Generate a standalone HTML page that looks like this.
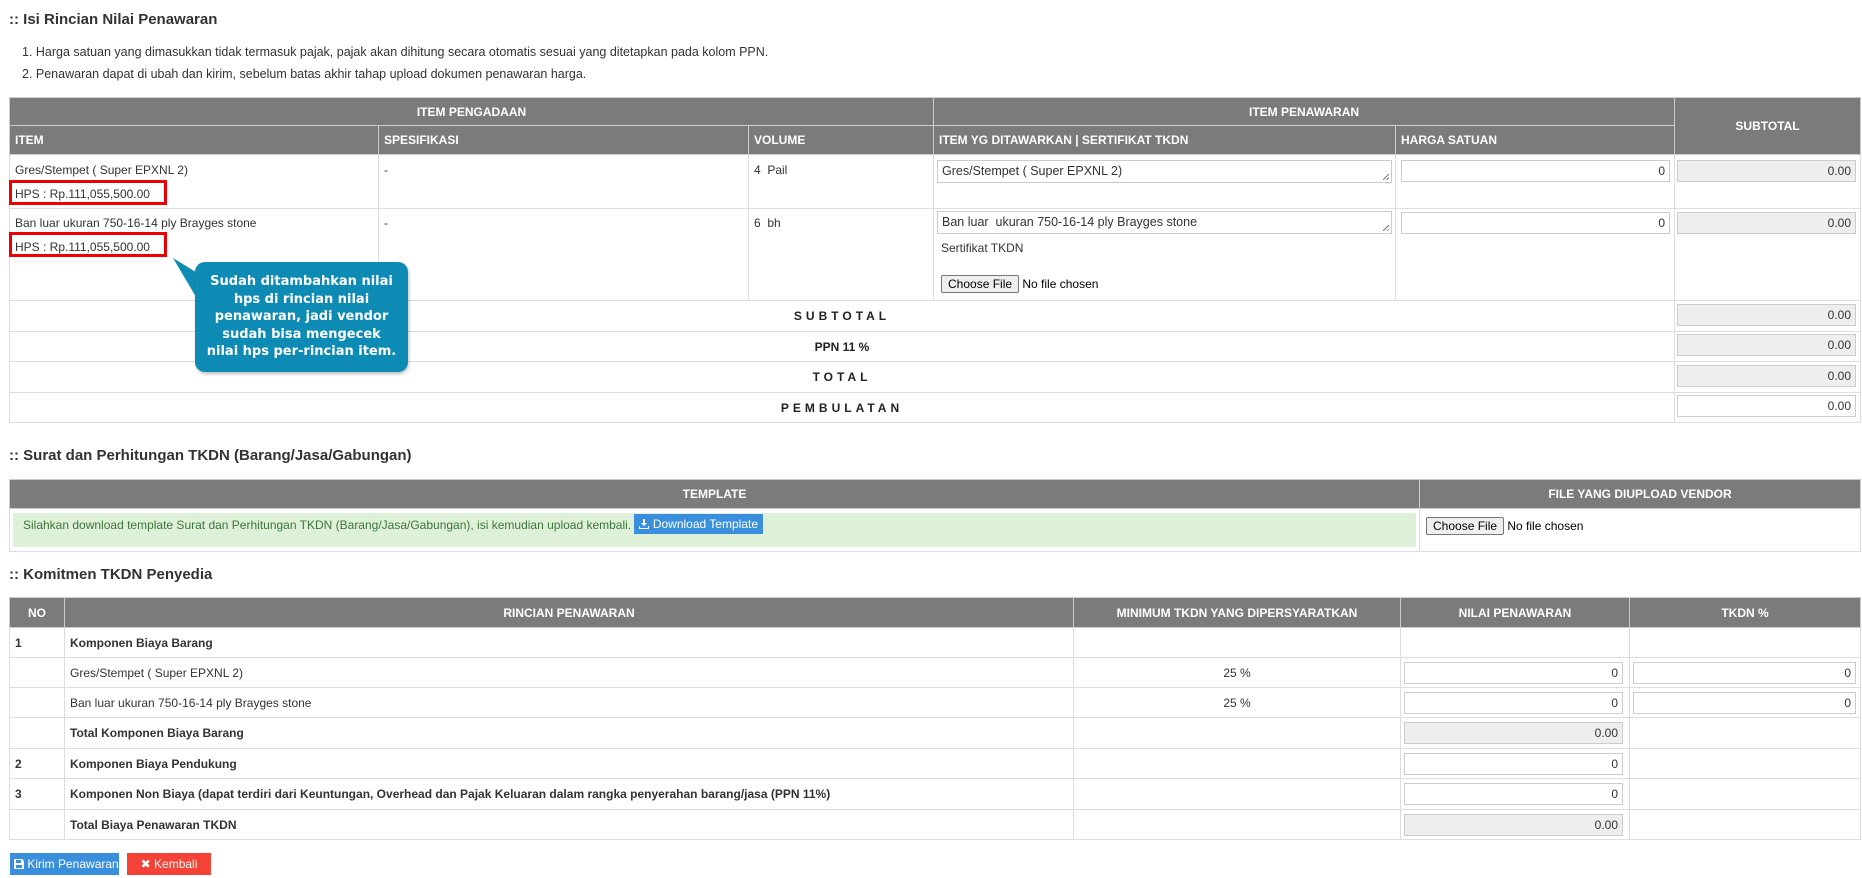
<!DOCTYPE html>
<html><head><meta charset="utf-8">
<style>
*{box-sizing:border-box;margin:0;padding:0}
body{width:1862px;height:878px;background:#fff;font-family:"Liberation Sans",Arial,sans-serif;font-size:12px;color:#333;position:relative;overflow:hidden}
.abs{position:absolute}
h3{position:absolute;font-size:15px;font-weight:bold;color:#333;left:9px}
table{position:absolute;border-collapse:collapse;table-layout:fixed}
td,th{border:1px solid #ddd;vertical-align:top;padding:0 5px}
th{background:#7b7b7b;color:#fff;font-weight:bold;font-size:12px;border-color:#ccc;vertical-align:middle;text-align:center}
th.l{text-align:left}
.inp{position:absolute;height:22px;border:1px solid #ccc;background:#fff;text-align:right;padding:3px 4px;font-size:12px;line-height:14px}
.inp.g{background:#eee}
.ta{position:absolute;height:23px;border:1px solid #ccc;background:#fff;padding:3px 4px;font-size:12.5px;line-height:14px}
.ta:after{content:"";position:absolute;right:2px;bottom:2px;width:6px;height:6px;background:linear-gradient(135deg,transparent 45%,#777 45%,#777 55%,transparent 55%,transparent 75%,#777 75%,#777 85%,transparent 85%)}
.fb{display:inline-block;border:1px solid #767676;background:#efefef;border-radius:2px;padding:1px 6px;font-size:12px;color:#000}
.ft{font-size:12px;color:#000}
.red{position:absolute;border:3px solid #e00;}
.sp{letter-spacing:4px;font-weight:bold;text-align:center;vertical-align:middle;color:#222}
</style></head><body>

<h3 style="top:11px">:: Isi Rincian Nilai Penawaran</h3>
<div class="abs" style="left:22px;top:45px;font-size:12.5px">1. Harga satuan yang dimasukkan tidak termasuk pajak, pajak akan dihitung secara otomatis sesuai yang ditetapkan pada kolom PPN.</div>
<div class="abs" style="left:22px;top:67px;font-size:12.5px">2. Penawaran dapat di ubah dan kirim, sebelum batas akhir tahap upload dokumen penawaran harga.</div>

<table style="left:9px;top:97px;width:1851px">
<colgroup><col style="width:369px"><col style="width:370px"><col style="width:185px"><col style="width:462px"><col style="width:279px"><col style="width:186px"></colgroup>
<tr style="height:28px"><th colspan="3">ITEM PENGADAAN</th><th colspan="2">ITEM PENAWARAN</th><th rowspan="2">SUBTOTAL</th></tr>
<tr style="height:29px"><th class="l">ITEM</th><th class="l">SPESIFIKASI</th><th class="l">VOLUME</th><th class="l">ITEM YG DITAWARKAN | SERTIFIKAT TKDN</th><th class="l">HARGA SATUAN</th></tr>
<tr style="height:54px"><td style="padding-top:8px">Gres/Stempet ( Super EPXNL 2)<div style="margin-top:10px">HPS : Rp.111,055,500.00</div></td><td style="padding-top:8px">-</td><td style="padding-top:8px">4&nbsp; Pail</td><td></td><td></td><td></td></tr>
<tr style="height:92px"><td style="padding-top:7px">Ban luar ukuran 750-16-14 ply Brayges stone<div style="margin-top:10px">HPS : Rp.111,055,500.00</div></td><td style="padding-top:7px">-</td><td style="padding-top:7px">6&nbsp; bh</td><td></td><td></td><td></td></tr>
<tr style="height:31px"><td colspan="5" class="sp">SUBTOTAL</td><td></td></tr>
<tr style="height:30px"><td colspan="5" style="text-align:center;vertical-align:middle;font-weight:bold;color:#222">PPN 11 %</td><td></td></tr>
<tr style="height:31px"><td colspan="5" class="sp">TOTAL</td><td></td></tr>
<tr style="height:30px"><td colspan="5" class="sp">PEMBULATAN</td><td></td></tr>
</table>

<div class="ta" style="left:937px;top:160px;width:455px">Gres/Stempet ( Super EPXNL 2)</div>
<div class="inp" style="left:1401px;top:160px;width:269px">0</div>
<div class="inp g" style="left:1677px;top:160px;width:179px">0.00</div>
<div class="ta" style="left:937px;top:211px;width:455px">Ban luar&nbsp; ukuran 750-16-14 ply Brayges stone</div>
<div class="inp" style="left:1401px;top:212px;width:269px">0</div>
<div class="inp g" style="left:1677px;top:212px;width:179px">0.00</div>
<div class="abs" style="left:941px;top:241px;font-size:12px">Sertifikat TKDN</div>
<div class="abs" style="left:941px;top:275px"><span class="fb">Choose File</span> <span class="ft">No file chosen</span></div>
<div class="inp g" style="left:1677px;top:304px;width:179px">0.00</div>
<div class="inp g" style="left:1677px;top:334px;width:179px">0.00</div>
<div class="inp g" style="left:1677px;top:365px;width:179px">0.00</div>
<div class="inp" style="left:1677px;top:395px;width:179px">0.00</div>

<div class="red" style="left:9px;top:180px;width:158px;height:25px"></div>
<div class="red" style="left:9px;top:232px;width:158px;height:25px"></div>

<svg class="abs" style="left:165px;top:252px" width="40" height="60"><polygon points="8,6 34,22 34,50" fill="#0e8bb5"/></svg>
<div class="abs" style="left:195px;top:262px;width:213px;height:110px;background:#0e8bb5;border-radius:10px;box-shadow:1px 2px 3px rgba(0,0,0,.25);color:#fff;font-family:'DejaVu Sans',sans-serif;font-weight:bold;font-size:13px;line-height:17.5px;text-align:center;padding-top:11px">Sudah ditambahkan nilai<br>hps di rincian nilai<br>penawaran, jadi vendor<br>sudah bisa mengecek<br>nilai hps per-rincian item.</div>

<h3 style="top:447px">:: Surat dan Perhitungan TKDN (Barang/Jasa/Gabungan)</h3>
<table style="left:9px;top:479px;width:1851px">
<colgroup><col style="width:1410px"><col style="width:441px"></colgroup>
<tr style="height:29px"><th>TEMPLATE</th><th>FILE YANG DIUPLOAD VENDOR</th></tr>
<tr style="height:43px"><td style="padding:4px 3px"><div style="background:#dff0d8;color:#3c763d;height:34px;padding:5px 8px 0 10px;font-size:12px">Silahkan download template Surat dan Perhitungan TKDN (Barang/Jasa/Gabungan), isi kemudian upload kembali. <span style="display:inline-block;background:#3a8fdd;color:#fff;padding:3px 5px;margin-top:-4px;vertical-align:middle"><svg width="10" height="10" viewBox="0 0 10 10" style="vertical-align:-1px"><path d="M4 0h2v4h2L5 7 2 4h2z M0 7h1v2h8V7h1v3H0z" fill="#fff"/></svg> Download Template</span></div></td>
<td style="padding:8px 6px"><span class="fb">Choose File</span> <span class="ft">No file chosen</span></td></tr>
</table>

<h3 style="top:566px">:: Komitmen TKDN Penyedia</h3>
<table style="left:9px;top:597px;width:1851px">
<colgroup><col style="width:55px"><col style="width:1009px"><col style="width:327px"><col style="width:229px"><col style="width:231px"></colgroup>
<tr style="height:30px"><th>NO</th><th>RINCIAN PENAWARAN</th><th>MINIMUM TKDN YANG DIPERSYARATKAN</th><th>NILAI PENAWARAN</th><th>TKDN %</th></tr>
<tr style="height:30px"><td style="padding-top:8px;font-weight:bold">1</td><td style="padding-top:8px;font-weight:bold">Komponen Biaya Barang</td><td></td><td></td><td></td></tr>
<tr style="height:30px"><td></td><td style="padding-top:8px">Gres/Stempet ( Super EPXNL 2)</td><td style="padding-top:8px;text-align:center">25 %</td><td></td><td></td></tr>
<tr style="height:30px"><td></td><td style="padding-top:8px">Ban luar ukuran 750-16-14 ply Brayges stone</td><td style="padding-top:8px;text-align:center">25 %</td><td></td><td></td></tr>
<tr style="height:31px"><td></td><td style="padding-top:8px;font-weight:bold">Total Komponen Biaya Barang</td><td></td><td></td><td></td></tr>
<tr style="height:30px"><td style="padding-top:8px;font-weight:bold">2</td><td style="padding-top:8px;font-weight:bold">Komponen Biaya Pendukung</td><td></td><td></td><td></td></tr>
<tr style="height:31px"><td style="padding-top:8px;font-weight:bold">3</td><td style="padding-top:8px;font-weight:bold">Komponen Non Biaya (dapat terdiri dari Keuntungan, Overhead dan Pajak Keluaran dalam rangka penyerahan barang/jasa (PPN 11%)</td><td></td><td></td><td></td></tr>
<tr style="height:30px"><td></td><td style="padding-top:8px;font-weight:bold">Total Biaya Penawaran TKDN</td><td></td><td></td><td></td></tr>
</table>
<div class="inp" style="left:1404px;top:662px;width:219px">0</div>
<div class="inp" style="left:1633px;top:662px;width:223px">0</div>
<div class="inp" style="left:1404px;top:692px;width:219px">0</div>
<div class="inp" style="left:1633px;top:692px;width:223px">0</div>
<div class="inp g" style="left:1404px;top:722px;width:219px">0.00</div>
<div class="inp" style="left:1404px;top:753px;width:219px">0</div>
<div class="inp" style="left:1404px;top:783px;width:219px">0</div>
<div class="inp g" style="left:1404px;top:814px;width:219px">0.00</div>

<div class="abs" style="left:10px;top:853px;width:109px;height:22px;background:#3a8fdd;color:#fff;font-size:12px;line-height:22px;padding-left:4px"><svg width="10" height="10" viewBox="0 0 10 10" style="vertical-align:-1px"><path d="M0 0h8l2 2v8H0z M2 1v3h5V1z M2 6v3h6V6z" fill="#fff" fill-rule="evenodd"/></svg> Kirim Penawaran</div>
<div class="abs" style="left:127px;top:853px;width:84px;height:22px;background:#f44336;color:#fff;font-size:12px;line-height:22px;text-align:center">&#x2716; Kembali</div>
</body></html>
